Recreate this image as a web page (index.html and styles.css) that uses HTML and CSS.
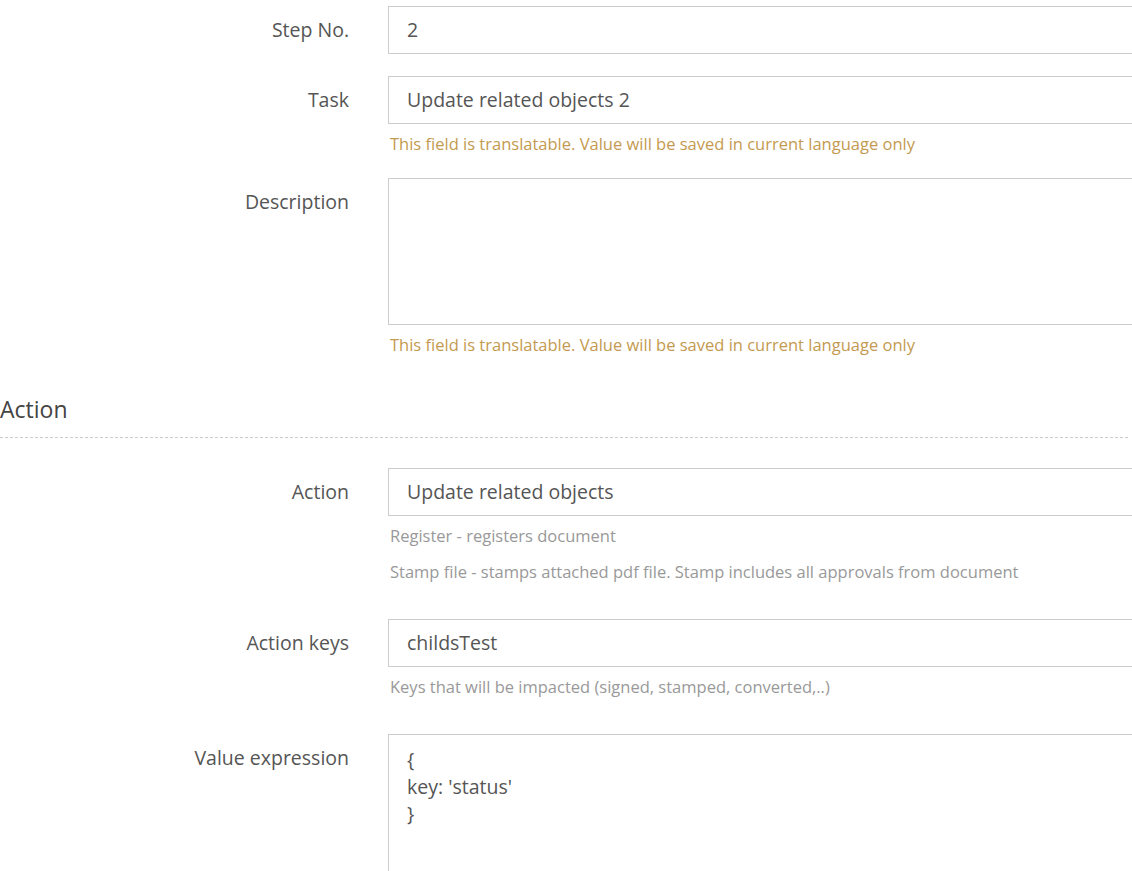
FILE: index.html
```html
<!DOCTYPE html>
<html lang="en">
<head>
<meta charset="utf-8">
<title>Step</title>
<link rel="stylesheet" href="styles.css">
</head>
<body>
<div class="page">
  <form class="form">
    <div class="row">
      <label class="label">Step No.</label>
      <div class="field">
        <div class="input">2</div>
      </div>
    </div>
    <div class="row">
      <label class="label">Task</label>
      <div class="field">
        <div class="input">Update related objects 2</div>
        <p class="help help-warn">This field is translatable. Value will be saved in current language only</p>
      </div>
    </div>
    <div class="row">
      <label class="label">Description</label>
      <div class="field">
        <div class="textarea textarea-desc"></div>
        <p class="help help-warn">This field is translatable. Value will be saved in current language only</p>
      </div>
    </div>

    <h2 class="section-title">Action</h2>

    <div class="row row-muted">
      <label class="label">Action</label>
      <div class="field">
        <div class="input">Update related objects</div>
        <p class="help help-muted">Register - registers document</p>
        <p class="help help-muted">Stamp file - stamps attached pdf file. Stamp includes all approvals from document</p>
      </div>
    </div>
    <div class="row row-muted">
      <label class="label">Action keys</label>
      <div class="field">
        <div class="input">childsTest</div>
        <p class="help help-muted">Keys that will be impacted (signed, stamped, converted,..)</p>
      </div>
    </div>
    <div class="row">
      <label class="label">Value expression</label>
      <div class="field">
        <div class="textarea textarea-code">{<br>key: 'status'<br>}</div>
      </div>
    </div>
  </form>
</div>
</body>
</html>
```
FILE: styles.css
```css
html, body {
  margin: 0;
  padding: 0;
  background: #fff;
  overflow: hidden;
}

body {
  font-family: "Open Sans", "Liberation Sans", sans-serif;
  color: #555;
}

.page {
  width: 1132px;
  height: 871px;
  overflow: hidden;
  padding-top: 6px;
  box-sizing: border-box;
}

.form {
  display: flex;
  flex-direction: column;
}

.row {
  display: grid;
  grid-template-columns: 349px 1fr;
  column-gap: 39px;
  margin-bottom: 22px;
}

.row-muted {
  margin-bottom: 35px;
}

.label {
  text-align: right;
  font-size: 19.5px;
  line-height: 48px;
  color: #555;
}

.field {
  margin-right: -20px;
  display: flex;
  flex-direction: column;
}

.input,
.textarea {
  border: 1px solid #ccc;
  font-size: 19.5px;
  color: #555;
  padding: 0 18px;
  box-sizing: border-box;
}

.input {
  height: 48px;
  line-height: 46px;
}

.textarea-desc {
  height: 147px;
}

.textarea-code {
  height: 200px;
  padding-top: 11px;
  line-height: 27px;
}

.help {
  margin: 8px 0 0;
  padding-left: 2px;
  font-size: 16.5px;
  line-height: 24px;
}

.help + .help {
  margin-top: 12px;
}

.help-warn {
  color: #c49a50;
}

.help-muted {
  color: #999;
}

.section-title {
  margin: 15px 0 30px;
  padding-bottom: 14px;
  font-size: 23px;
  line-height: 30px;
  font-weight: 400;
  color: #444;
  background-image: repeating-linear-gradient(to right, #ccc 0 3px, transparent 3px 5px);
  background-size: 100% 1px;
  background-repeat: no-repeat;
  background-position: left bottom;
  width: 1130px;
}
```
